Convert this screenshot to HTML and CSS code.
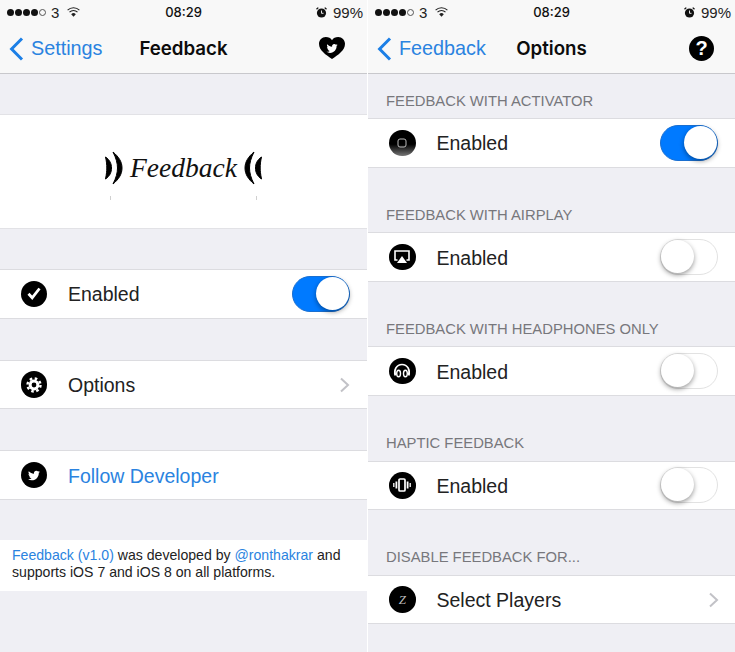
FILE: index.html
```html
<!DOCTYPE html>
<html lang="en">
<head>
    <meta charset="UTF-8">
    <meta name="viewport" content="width=device-width, initial-scale=1.0">
    <title>Feedback</title>
    <link rel="stylesheet" href="styles.css">
</head>
<body>

<div class="screens">

    <div class="pane">
        <div class="status">
            <div class="signal"><i></i><i></i><i></i><i></i><i class="off"></i><span>3</span>
                <svg class="wifi" width="13" height="10" viewBox="0 0 13 10"><path d="M.6 3.200a8.300 8.300 0 0 1 11.800 0M2.500 5.200a5.500 5.500 0 0 1 8 0" fill="none" stroke="#222" stroke-width="1.100"/><path d="M6.500 9.800L4.200 7.200a3.200 3.200 0 0 1 4.600 0z" fill="#222"/></svg>
            </div>
            <div class="time">08:29</div>
            <div class="battery">
                <svg class="alarm" width="11" height="11" viewBox="0 0 11 11"><circle cx="5.500" cy="6" r="4.600" fill="#111"/><path d="M5.500 3.500v2.800h2" fill="none" stroke="#fff" stroke-width=".9"/><path d="M.5 2.300L2.300.6M10.500 2.300L8.700.6" stroke="#111" stroke-width="1.300"/></svg>
                <span>99%</span>
            </div>
        </div>
        <div class="nav">
            <a class="back"><svg width="15" height="24" viewBox="0 0 15 24"><path d="M13 1.500L2.600 12 13 22.500" fill="none" stroke="#1c7fe6" stroke-width="3"/></svg>Settings</a>
            <div class="nav-title">Feedback</div>
            <svg class="nav-icon heart" width="26" height="22" viewBox="0 0 26 22"><path d="M13 22C7 18 0 13.500 0 6.800 0 3 3 0 6.800 0 9.500 0 11.800 1.200 13 3.200 14.200 1.200 16.500 0 19.200 0 23 0 26 3 26 6.800 26 13.500 19 18 13 22z" fill="#000"/><g transform="translate(7.500 6.500) scale(.7)"><path d="M16 2.200c-.6.300-1.200.4-1.900.5.700-.4 1.200-1 1.400-1.800-.6.400-1.300.6-2 .8a3.200 3.200 0 0 0-5.500 2.900C5.300 4.500 2.900 3.200 1.100 1.200.3 2.700.7 4.500 2.100 5.400c-.5 0-1-.1-1.500-.4 0 1.600 1.100 3 2.600 3.300-.5.100-1 .1-1.500 0 .4 1.300 1.600 2.200 3 2.300-1.300 1-2.900 1.500-4.700 1.300C1.500 12.900 3.200 13.400 5 13.400c6.100 0 9.600-5.200 9.400-9.800.6-.4 1.200-.9 1.600-1.400z" fill="#fff"/></g></svg>
        </div>

        <div class="gap gap-logo"></div>
        <div class="logo-card">
            <div class="logo">
                <svg width="20" height="34" viewBox="-1 -1 20 34"><path d="M.5 5C5 8 6.500 12 6.500 16S5 24 .5 27C1.500 22 1.800 19 1.800 16S1.500 9 .5 5zM8 0c6 5 9 10 9 16s-3 11-9 16c3-6 4.500-11 4.500-16S11 6 8 0z" fill="#000" stroke="#000" stroke-width="1" stroke-linejoin="round"/></svg>
                <span class="logo-text">Feedback</span>
                <svg class="flip" width="20" height="34" viewBox="-1 -1 20 34"><path d="M.5 5C5 8 6.500 12 6.500 16S5 24 .5 27C1.500 22 1.800 19 1.800 16S1.500 9 .5 5zM8 0c6 5 9 10 9 16s-3 11-9 16c3-6 4.500-11 4.500-16S11 6 8 0z" fill="#000" stroke="#000" stroke-width="1" stroke-linejoin="round"/></svg>
            </div>
        </div>
        <div class="gap"></div>
        <div class="row">
            <span class="icon">
                <svg width="14" height="13" viewBox="0 0 14 13"><path d="M1.500 6.800l3.700 4L12.500 1.500" fill="none" stroke="#fff" stroke-width="2.800"/></svg>
            </span>
            <span class="label">Enabled</span>
            <span class="switch on"></span>
        </div>
        <div class="gap gap-wide"></div>
        <div class="row">
            <span class="icon">
                <svg width="16" height="16" viewBox="0 0 16 16"><circle cx="8" cy="8" r="5.400" fill="#fff"/><circle cx="8" cy="8" r="6.500" fill="none" stroke="#fff" stroke-width="2.400" stroke-dasharray="2.550 2.550"/><circle cx="8" cy="8" r="2.400" fill="#000"/></svg>
            </span>
            <span class="label">Options</span>
            <svg class="chevron" width="11" height="16" viewBox="0 0 11 16"><path d="M2 1.500L9 8l-7 6.500" fill="none" stroke="#c2c2c7" stroke-width="2"/></svg>
        </div>
        <div class="gap gap-wide"></div>
        <div class="row">
            <span class="icon">
                <svg width="12" height="11" viewBox="0 0 16 14"><path d="M16 2.200c-.6.300-1.200.4-1.900.5.700-.4 1.200-1 1.400-1.800-.6.400-1.300.6-2 .8a3.200 3.200 0 0 0-5.500 2.900C5.300 4.500 2.900 3.200 1.100 1.200.3 2.700.7 4.500 2.100 5.400c-.5 0-1-.1-1.500-.4 0 1.600 1.100 3 2.600 3.300-.5.100-1 .1-1.500 0 .4 1.300 1.600 2.200 3 2.300-1.300 1-2.900 1.500-4.700 1.300C1.500 12.900 3.200 13.400 5 13.400c6.100 0 9.600-5.200 9.400-9.800.6-.4 1.200-.9 1.600-1.400z" fill="#fff"/></svg>
            </span>
            <span class="label link">Follow Developer</span>
        </div>
        <div class="gap"></div>
        <div class="footer-card">
            <a class="link">Feedback (v1.0)</a> was developed by <a class="link">@ronthakrar</a> and<br>
            supports iOS 7 and iOS 8 on all platforms.
        </div>
    </div>

    <div class="pane pane-right">
        <div class="status">
            <div class="signal"><i></i><i></i><i></i><i></i><i class="off"></i><span>3</span>
                <svg class="wifi" width="13" height="10" viewBox="0 0 13 10"><path d="M.6 3.200a8.300 8.300 0 0 1 11.800 0M2.500 5.200a5.500 5.500 0 0 1 8 0" fill="none" stroke="#222" stroke-width="1.100"/><path d="M6.500 9.800L4.200 7.200a3.200 3.200 0 0 1 4.600 0z" fill="#222"/></svg>
            </div>
            <div class="time">08:29</div>
            <div class="battery">
                <svg class="alarm" width="11" height="11" viewBox="0 0 11 11"><circle cx="5.500" cy="6" r="4.600" fill="#111"/><path d="M5.500 3.500v2.800h2" fill="none" stroke="#fff" stroke-width=".9"/><path d="M.5 2.300L2.300.6M10.500 2.300L8.700.6" stroke="#111" stroke-width="1.300"/></svg>
                <span>99%</span>
            </div>
        </div>
        <div class="nav">
            <a class="back"><svg width="15" height="24" viewBox="0 0 15 24"><path d="M13 1.500L2.600 12 13 22.500" fill="none" stroke="#1c7fe6" stroke-width="3"/></svg>Feedback</a>
            <div class="nav-title">Options</div>
            <span class="nav-icon help">?</span>
        </div>

        <div class="section-head first">FEEDBACK WITH ACTIVATOR</div>
        <div class="row">
            <span class="icon icon-home">
                <svg width="10" height="10" viewBox="0 0 10 10"><rect x="1" y="1" width="8" height="8" rx="2" fill="none" stroke="#bbb" stroke-width="1"/></svg>
            </span>
            <span class="label">Enabled</span>
            <span class="switch on"></span>
        </div>

        <div class="section-head">FEEDBACK WITH AIRPLAY</div>
        <div class="row">
            <span class="icon">
                <svg width="16" height="14" viewBox="0 0 16 14"><path d="M3.500 10H1V1h14v9h-2.500" fill="none" stroke="#fff" stroke-width="1.600"/><path d="M8 6l5 7H3z" fill="#fff"/></svg>
            </span>
            <span class="label">Enabled</span>
            <span class="switch"></span>
        </div>

        <div class="section-head">FEEDBACK WITH HEADPHONES ONLY</div>
        <div class="row">
            <span class="icon">
                <svg width="18" height="18" viewBox="0 0 18 18"><path d="M2.300 13.500C.5 8 3.500 2.500 9 2.500s8.500 5.500 6.700 11" fill="none" stroke="#fff" stroke-width="1.700"/><ellipse cx="5.600" cy="11.500" rx="1.900" ry="3.300" fill="none" stroke="#fff" stroke-width="1.400"/><ellipse cx="12.400" cy="11.500" rx="1.900" ry="3.300" fill="none" stroke="#fff" stroke-width="1.400"/></svg>
            </span>
            <span class="label">Enabled</span>
            <span class="switch"></span>
        </div>

        <div class="section-head">HAPTIC FEEDBACK</div>
        <div class="row">
            <span class="icon">
                <svg width="18" height="14" viewBox="0 0 18 14"><rect x="6" y="1" width="6" height="12" rx="1" fill="none" stroke="#fff" stroke-width="1.700"/><path d="M3.400 3.500v7M14.600 3.500v7" stroke="#fff" stroke-width="1.800"/><path d="M.8 5v4M17.200 5v4" stroke="#fff" stroke-width="1.300"/></svg>
            </span>
            <span class="label">Enabled</span>
            <span class="switch"></span>
        </div>

        <div class="section-head">DISABLE FEEDBACK FOR...</div>
        <div class="row">
            <span class="icon icon-z">Z</span>
            <span class="label">Select Players</span>
            <svg class="chevron" width="11" height="16" viewBox="0 0 11 16"><path d="M2 1.500L9 8l-7 6.500" fill="none" stroke="#c2c2c7" stroke-width="2"/></svg>
        </div>
    </div>

</div>

</body>
</html>
```

FILE: styles.css
```css
* {
    box-sizing: border-box;
}
html, body {
    margin: 0;
    height: 100%;
}
body {
    font-family: "Liberation Sans", Arial, sans-serif;
    background-color: #fff;
    color: #1c1c1e;
    overflow: hidden;
}
.screens {
    display: flex;
    justify-content: space-between;
    height: 652px;
}
.pane {
    width: 367px;
    height: 652px;
    background-color: #efeff4;
    overflow: hidden;
}
.status {
    display: flex;
    justify-content: space-between;
    align-items: center;
    position: relative;
    height: 24px;
    padding: 0 4px 0 7px;
    background: #f8f8f8;
    font-size: 15px;
    color: #222;
}
.signal, .battery {
    display: flex;
    align-items: center;
}
.signal i {
    width: 7px;
    height: 7px;
    margin-right: 1px;
    border-radius: 50%;
    background: #111;
}
.signal i.off {
    background: none;
    border: 1px solid #555;
}
.signal span {
    margin-left: 4px;
}
.wifi {
    margin-left: 8px;
}
.time {
    position: absolute;
    left: 0;
    right: 0;
    top: 4px;
    text-align: center;
    font-family: Inter, "Liberation Sans", sans-serif;
    font-weight: 500;
    font-size: 13px;
    color: #111;
}
.alarm {
    margin-right: 6px;
}
.nav {
    display: flex;
    align-items: center;
    position: relative;
    height: 50px;
    padding-left: 9px;
    background: #f8f8f8;
    border-bottom: 1px solid #c8c8cc;
}
.back {
    display: flex;
    align-items: center;
    gap: 7px;
    color: #2a83e0;
    font-size: 19.800px;
}
.nav-title {
    position: absolute;
    left: 0;
    right: 0;
    padding-bottom: 1px;
    text-align: center;
    font-family: Inter, "Liberation Sans", sans-serif;
    font-size: 18.700px;
    font-weight: 600;
    color: #0c0c0c;
}
.nav-icon {
    position: absolute;
    right: 22px;
    top: 13px;
}
.help {
    top: 12px;
    right: 21px;
    width: 25px;
    height: 25px;
    border-radius: 50%;
    background: #000;
    color: #fff;
    font-size: 20px;
    font-weight: bold;
    line-height: 25px;
    text-align: center;
}
.gap {
    height: 40px;
}
.gap-wide {
    height: 41px;
}
.gap-logo {
    height: 39.500px;
}
.logo-card {
    display: flex;
    justify-content: center;
    align-items: center;
    height: 115.500px;
    padding-bottom: 6px;
    background: #fff;
    border-top: 1px solid #e2e2e6;
    border-bottom: 1px solid #e2e2e6;
}
.logo {
    display: flex;
    align-items: center;
    position: relative;
    gap: 6px;
}
.logo::before, .logo::after {
    content: "";
    position: absolute;
    top: 45px;
    width: 1px;
    height: 4px;
    background: #d0d0d0;
}
.logo::before {
    left: 6px;
}
.logo::after {
    right: 6px;
}
.flip {
    transform: scaleX(-1);
}
.logo-text {
    font-family: "Liberation Serif", serif;
    font-style: italic;
    font-size: 27.500px;
    color: #111;
}
.row {
    display: flex;
    align-items: center;
    height: 49.700px;
    padding: 0 17px 0 20.500px;
    background: #fff;
    border-top: 1px solid #dcdce0;
    border-bottom: 1px solid #dcdce0;
}
.pane-right .row {
    padding-left: 21px;
}
.pane-right .chevron {
    margin-right: -1px;
}
.icon {
    display: flex;
    justify-content: center;
    align-items: center;
    flex: none;
    width: 26.500px;
    height: 26.500px;
    margin-right: 21px;
    border-radius: 50%;
    background: #000;
}
.icon-home {
    background: linear-gradient(#000 55%, #777);
}
.icon-z {
    color: #bbb;
    font-family: "Liberation Serif", serif;
    font-style: italic;
    font-size: 13px;
}
.label {
    flex: 1;
    padding-top: 2px;
    font-size: 19.500px;
    color: #222;
}
.link {
    color: #2a83e0;
}
.switch {
    position: relative;
    flex: none;
    width: 58px;
    height: 36px;
    border-radius: 18px;
    background: #fff;
    border: 1px solid #e2e2e2;
}
.switch::after {
    content: "";
    position: absolute;
    left: 0;
    top: 0;
    width: 33px;
    height: 33px;
    border-radius: 50%;
    background: #fff;
    box-shadow: 0 2px 5px rgba(0, 0, 0, 0.4);
}
.switch.on {
    background: #007aff;
    border-color: #1a6fd0;
}
.switch.on::after {
    left: auto;
    right: 0;
}
.section-head {
    display: flex;
    align-items: flex-end;
    height: 64.500px;
    padding: 0 0 9.500px 18px;
    font-size: 14.800px;
    color: #77777c;
}
.section-head.first {
    height: 44px;
}
.footer-card {
    height: 51px;
    padding: 7px 12px 0;
    background: #fff;
    font-size: 14.100px;
    line-height: 17px;
    color: #222;
}
```
